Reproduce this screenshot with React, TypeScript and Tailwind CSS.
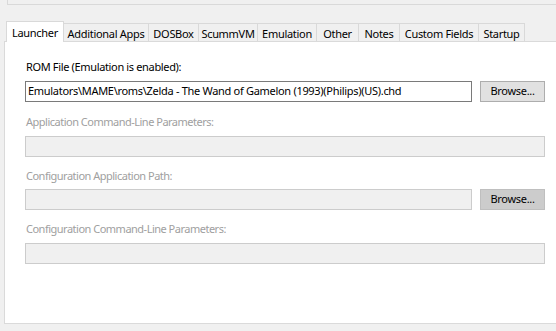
const tabs = [
  { label: "Additional Apps", w: "w-[85px]" },
  { label: "DOSBox", w: "w-[50px]" },
  { label: "ScummVM", w: "w-[59px]" },
  { label: "Emulation", w: "w-[59px]" },
  { label: "Other", w: "w-[42px]" },
  { label: "Notes", w: "w-[41px]" },
  { label: "Custom Fields", w: "w-[79px]" },
  { label: "Startup", w: "w-[46px]" },
];

function Label({ text, disabled }: { text: string; disabled?: boolean }) {
  return (
    <div
      className={
        "h-[15px] leading-[15px] pl-px whitespace-nowrap " +
        (disabled ? "text-[#a0a0a0] tracking-[-0.5px]" : "text-black tracking-[-0.35px]")
      }
    >
      {text}
    </div>
  );
}

function Button({ disabled }: { disabled?: boolean }) {
  return (
    <div
      className={
        "w-[65px] h-[21px] flex items-center justify-center border text-black " +
        (disabled ? "bg-[#cccccc] border-[#bfbfbf]" : "bg-[#e1e1e1] border-[#adadad]")
      }
    >
      Browse...
    </div>
  );
}

function DisabledInput({ w }: { w: string }) {
  return <div className={w + " h-[21px] bg-[#f0f0f0] border border-[#cccccc]"} />;
}

export default function App() {
  return (
    <div
      className="w-[556px] h-[331px] bg-[#f0f0f0] overflow-hidden text-[11px] tracking-[-0.3px] text-black"
      style={{ fontFamily: '"Noto Sans", sans-serif' }}
    >
      <div className="ml-[7px] h-[5px] border-l border-b border-[#d9d9d9]" />
      <div className="mt-[16px] ml-[6px] h-[20px] flex items-end">
        <div className="relative z-10 w-[58px] h-[21px] -mb-px bg-white border-l border-t border-r border-[#d9d9d9] flex justify-center pt-[3px] leading-[15px]">
          Launcher
        </div>
        {tabs.map((t) => (
          <div
            key={t.label}
            className={
              t.w +
              " h-[18px] bg-[#f0f0f0] border-t border-r border-[#d9d9d9] flex justify-center pt-[2px] leading-[15px] whitespace-nowrap"
            }
          >
            {t.label}
          </div>
        ))}
      </div>
      <div className="ml-[4px] w-[600px] h-[283px] bg-white border-t border-l border-b border-[#dadada] pl-[20px] pt-[17px]">
        <div className="w-[520px] flex flex-col">
          <Label text="ROM File (Emulation is enabled):" />
          <div className="mt-[7px] flex gap-[8px]">
            <div className="w-[447px] h-[21px] bg-white border border-[#7a7a7a] flex items-center pl-[2px] whitespace-nowrap overflow-hidden">
              Emulators\MAME\roms\Zelda - The Wand of Gamelon (1993)(Philips)(US).chd
            </div>
            <Button />
          </div>

          <div className="mt-[12px]">
            <Label text="Application Command-Line Parameters:" disabled />
          </div>
          <div className="mt-[7px]">
            <DisabledInput w="w-[520px]" />
          </div>

          <div className="mt-[11px]">
            <Label text="Configuration Application Path:" disabled />
          </div>
          <div className="mt-[6px] flex gap-[8px]">
            <DisabledInput w="w-[447px]" />
            <Button disabled />
          </div>

          <div className="mt-[11px]">
            <Label text="Configuration Command-Line Parameters:" disabled />
          </div>
          <div className="mt-[7px]">
            <DisabledInput w="w-[520px]" />
          </div>
        </div>
      </div>
    </div>
  );
}
